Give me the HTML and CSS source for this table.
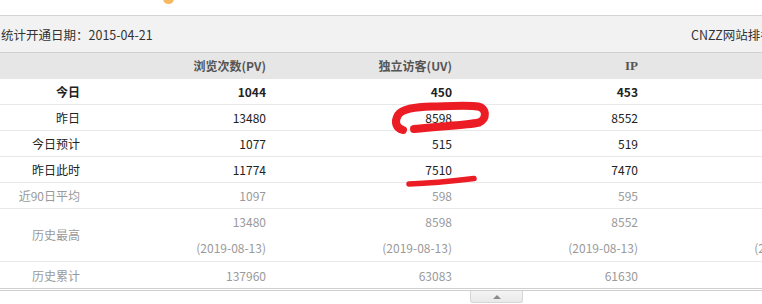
FILE: index.html
```html
<!DOCTYPE html>
<html lang="zh">
<head>
<meta charset="utf-8">
<link rel="stylesheet" href="styles.css">
</head>
<body>
<div class="page">
  <div class="topbar"><span class="orange-dot"></span></div>
  <div class="infobar">
    <span class="since">统计开通日期：2015-04-21</span>
    <span class="rank">CNZZ网站排名：</span>
  </div>
  <table class="stats">
    <colgroup>
      <col class="c-label"><col class="c-num"><col class="c-num"><col class="c-num"><col class="c-num">
    </colgroup>
    <thead>
      <tr><th></th><th>浏览次数(PV)</th><th>独立访客(UV)</th><th class="ip">IP</th><th>新独立访客</th></tr>
    </thead>
    <tbody>
      <tr class="today"><td>今日</td><td>1044</td><td>450</td><td>453</td><td>380</td></tr>
      <tr><td>昨日</td><td>13480</td><td>8598</td><td>8552</td><td>7700</td></tr>
      <tr><td>今日预计</td><td>1077</td><td>515</td><td>519</td><td>430</td></tr>
      <tr><td>昨日此时</td><td>11774</td><td>7510</td><td>7470</td><td>6900</td></tr>
      <tr class="muted"><td>近90日平均</td><td>1097</td><td>598</td><td>595</td><td>510</td></tr>
      <tr class="muted tall"><td>历史最高</td><td>13480<br>(2019-08-13)</td><td>8598<br>(2019-08-13)</td><td>8552<br>(2019-08-13)</td><td>7700<br>(2019-08-13)</td></tr>
      <tr class="muted last"><td>历史累计</td><td>137960</td><td>63083</td><td>61630</td><td>52000</td></tr>
    </tbody>
  </table>
  <div class="toggle"><span class="tri"></span></div>
  <svg class="marks" width="762" height="304" viewBox="0 0 762 304">
    <path d="M403 130 C396 128 394 122 398 115 C402 109 414 107 432 106.5 C452 106 470 105 478 106.5 C487 108 487 119 479 122.5 C466 125.5 440 126 414 129" fill="none" stroke="#ec1c24" stroke-width="8" stroke-linecap="round" stroke-linejoin="round"/>
    <path d="M409 184 C425 183.5 445 182 474 178.5" fill="none" stroke="#ec1c24" stroke-width="5.5" stroke-linecap="round"/>
  </svg>
</div>
</body>
</html>
```
FILE: styles.css
```css
html, body {
  margin: 0;
  padding: 0;
  background: #fff;
}
body {
  width: 762px;
  height: 304px;
  overflow: hidden;
  font-family: "Noto Sans CJK SC", "Noto Sans", sans-serif;
  font-size: 12px;
  color: #222;
}
.page {
  position: relative;
  width: 1000px;
}
.topbar {
  height: 15px;
  border-bottom: 1px solid #d4d4d4;
  overflow: hidden;
}
.orange-dot {
  display: block;
  width: 11px;
  height: 11px;
  margin-left: 163px;
  margin-top: -7px;
  border-radius: 50%;
  background: #f6a53a;
  opacity: 0.8;
}
.infobar {
  display: grid;
  grid-template-columns: 691px auto;
  align-items: center;
  height: 36px;
  background: #f2f2f2;
  border-bottom: 1px solid #d0d0d0;
  font-size: 12.5px;
  color: #333;
}
.since {
  padding-left: 1px;
}
.stats {
  border-collapse: collapse;
  table-layout: fixed;
  width: 836px;
}
.c-label { width: 92px; }
.c-num { width: 186px; }
.stats th,
.stats td {
  padding: 0 12px 0 0;
  text-align: right;
  white-space: nowrap;
}
.stats th {
  height: 26px;
  background: #e6e6e6;
  color: #555;
  font-weight: bold;
  line-height: 26px;
}
.stats th.ip {
  font-family: "Liberation Serif", serif;
  font-size: 13px;
}
.stats td {
  height: 25px;
  line-height: 25px;
  border-bottom: 1px solid #e8e8e8;
}
.stats tr.today td {
  font-weight: bold;
}
.stats tr.muted td {
  color: #9a9a9a;
}
.stats tr.tall td {
  height: 50px;
  line-height: 26px;
}
.stats tr.last td {
  border-bottom: 3px double #cfcfcf;
  height: 26px;
}
.toggle {
  width: 51px;
  height: 11px;
  margin-left: 470px;
  border: 1px solid #d6d6d6;
  border-top: 0;
  border-radius: 0 0 3px 3px;
  background: linear-gradient(#f4f4f4, #e9e9e9);
  display: flex;
  justify-content: center;
  align-items: center;
}
.tri {
  width: 0;
  height: 0;
  border-left: 4px solid transparent;
  border-right: 4px solid transparent;
  border-bottom: 4px solid #8a8a8a;
}
.marks {
  position: absolute;
  left: 0;
  top: 0;
  pointer-events: none;
}
```
